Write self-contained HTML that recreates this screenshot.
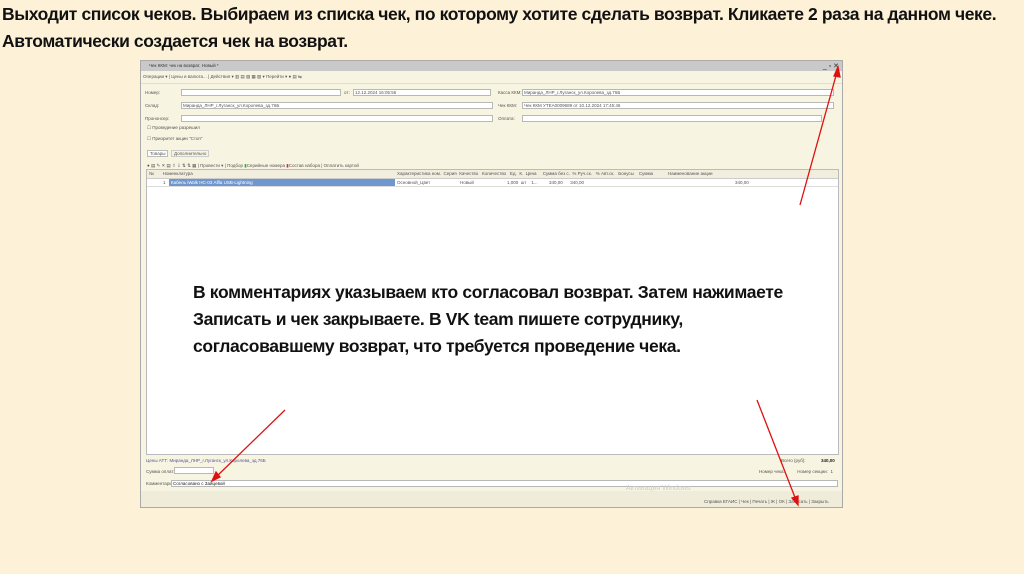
<!DOCTYPE html>
<html><head><meta charset="utf-8"><style>
body{margin:0;width:1024px;height:574px;background:#fdf1d8;font-family:"Liberation Sans",sans-serif;position:relative;overflow:hidden}
.h{position:absolute;left:2px;font-weight:bold;font-size:17.5px;color:#111;letter-spacing:-0.4px;white-space:nowrap}
.win{position:absolute;left:140px;top:60px;width:703px;height:448px;background:#f8f4e2;border:1px solid #aaa;box-sizing:border-box;overflow:hidden}
.tb{position:absolute;left:0;top:0;width:100%;height:10px;background:#c9c9c9}
.t{position:absolute;font-size:4.5px;color:#555;white-space:nowrap}
.f{position:absolute;height:7px;background:#fff;border:1px solid #b8b8b8;box-sizing:border-box}
.grid{position:absolute;left:5px;top:108px;width:693px;height:286px;background:#fff;border:1px solid #bbb;box-sizing:border-box}
.mid{position:absolute;left:193px;top:279px;font-weight:bold;font-size:17.5px;line-height:27px;color:#111;letter-spacing:-0.35px;white-space:nowrap}
</style></head><body>
<div class="h" style="top:4px">Выходит список чеков. Выбираем из списка чек, по которому хотите сделать возврат. Кликаете 2 раза на данном чеке.</div>
<div class="h" style="top:31px">Автоматически создается чек на возврат.</div>
<div class="win">
 <div class="tb"></div>
 <div class="t" style="left:8px;top:2px;color:#333">Чек ККМ: чек на возврат. Новый *</div>
 <div class="t" style="right:3px;top:1px;font-size:7px;color:#333">_ ▫ ✕</div>
 <div class="t" style="left:2px;top:13px">Операции ▾ | Цены и валюта... | Действия ▾ ▥ ▤ ▧ ▦ ▨ ▾ Перейти ▾ ● ▤ ⇆</div>
 <div style="position:absolute;left:0;top:22px;width:100%;height:1px;background:#ddd"></div>
 <div class="t" style="left:4px;top:29px">Номер:</div><div class="f" style="left:40px;top:28px;width:160px"></div>
 <div class="t" style="left:203px;top:29px">от:</div><div class="f" style="left:212px;top:28px;width:138px"></div>
 <div class="t" style="left:214px;top:29px">12.12.2024 16:05:56</div>
 <div class="t" style="left:4px;top:42px">Склад:</div><div class="f" style="left:40px;top:41px;width:312px"></div>
 <div class="t" style="left:42px;top:42px">Миранда_ЛНР_г.Луганск_ул.Королева_зд.76Б</div>
 <div class="t" style="left:4px;top:55px">Прононсер:</div><div class="f" style="left:40px;top:54px;width:312px"></div>
 <div class="t" style="left:357px;top:29px">Касса ККМ:</div><div class="f" style="left:381px;top:28px;width:312px"></div>
 <div class="t" style="left:383px;top:29px">Миранда_ЛНР_г.Луганск_ул.Королева_зд.76Б</div>
 <div class="t" style="left:357px;top:42px">Чек ККМ:</div><div class="f" style="left:381px;top:41px;width:312px"></div>
 <div class="t" style="left:383px;top:42px">Чек ККМ УТЕА0009689 от 10.12.2024 17:45:46</div>
 <div class="t" style="left:357px;top:55px">Оплата:</div><div class="f" style="left:381px;top:54px;width:300px"></div>
 <div class="t" style="left:6px;top:64px">☐ Проведение разрешил</div>
 <div class="t" style="left:6px;top:75px">☐ Приоритет акции "Стоп"</div>
 <div class="t" style="left:6px;top:89px;background:#fff;border:1px solid #bbb;padding:0 2px">Товары</div>
 <div class="t" style="left:30px;top:89px;border:1px solid #ccc;padding:0 2px">Дополнительно</div>
 <div class="t" style="left:6px;top:102px">● ▤ ✎ ✕ ▤ ⇧ ⇩ ⇅ ⇅ ▦ | Провести ▾ | Подбор <span style="color:#3a3">▮</span>Серийные номера <span style="color:#c33">▮</span>Состав набора | Оплатить картой</div>
 <div class="grid">
  <div style="position:absolute;left:0;top:0;width:100%;height:8px;background:#f1eedd;border-bottom:1px solid #ccc"></div>
  <div class="t" style="left:2px;top:1px">№&nbsp;&nbsp;&nbsp;&nbsp;&nbsp;&nbsp;&nbsp;Номенклатура</div>
  <div class="t" style="left:250px;top:1px">Характеристика ном. &nbsp;Серия &nbsp;Качество &nbsp;&nbsp;Количество &nbsp;&nbsp;Ед. &nbsp;К. &nbsp;Цена &nbsp;&nbsp;&nbsp;&nbsp;Сумма без с. &nbsp;% Руч.ск. &nbsp;&nbsp;% Авт.ск. &nbsp;&nbsp;Бонусы &nbsp;&nbsp;&nbsp;Сумма &nbsp;&nbsp;&nbsp;&nbsp;&nbsp;&nbsp;&nbsp;&nbsp;&nbsp;&nbsp;&nbsp;Наименование акции</div>
  <div style="position:absolute;left:22px;top:9px;width:226px;height:7px;background:#6f97cf"></div>
  <div class="t" style="left:24px;top:10px;color:#fff">Кабель iWalk HC-03 Аlfla USB-Lightning</div>
  <div class="t" style="left:16px;top:10px">1</div>
  <div class="t" style="left:250px;top:10px">Основной_Цвет</div>
  <div class="t" style="left:313px;top:10px">Новый</div>
  <div class="t" style="left:360px;top:10px">1,000 &nbsp;шт &nbsp;&nbsp;&nbsp;1... &nbsp;&nbsp;&nbsp;&nbsp;&nbsp;&nbsp;&nbsp;&nbsp;340,00 &nbsp;&nbsp;&nbsp;&nbsp;&nbsp;340,00</div>
  <div class="t" style="left:588px;top:10px">340,00</div>
  <div style="position:absolute;left:0;top:16px;width:100%;height:1px;background:#ddd"></div>
 </div>
 <div class="t" style="left:5px;top:397px;color:#559">Цены АТТ: Миранда_ЛНР_г.Луганск_ул.Королева_зд.76Б</div>
 <div class="t" style="left:640px;top:397px">Всего (руб):</div><div class="t" style="left:680px;top:397px;font-weight:bold;color:#222">340,00</div>
 <div class="t" style="left:5px;top:408px">Сумма оплат:</div><div class="f" style="left:33px;top:406px;width:40px"></div>
 <div class="t" style="left:618px;top:408px">Номер чека: &nbsp;&nbsp;&nbsp;&nbsp;&nbsp;&nbsp;&nbsp;&nbsp;&nbsp;Номер секции: &nbsp;1</div>
 <div class="t" style="left:5px;top:420px">Комментарий:</div><div class="f" style="left:30px;top:419px;width:667px"></div>
 <div class="t" style="left:32px;top:420px;color:#222">Согласовано с Зайцевой</div>
 <div style="position:absolute;left:0;top:430px;width:100%;height:17px;background:#efecd9"></div>
 <div class="t" style="left:485px;top:424px;font-size:7px;color:#ccc">Активация Windows</div>
 <div class="t" style="left:563px;top:438px">Справка ЕГАИС | Чек | Печать | Ж | ОК | Записать | Закрыть</div>
</div>
<div class="mid">В комментариях указываем кто согласовал возврат. Затем нажимаете<br>Записать и чек закрываете. В VK team пишете сотруднику,<br>согласовавшему возврат, что требуется проведение чека.</div>
<svg width="1024" height="574" style="position:absolute;left:0;top:0">
<g stroke="#d11" stroke-width="1.3" fill="#d11">
<line x1="285" y1="410" x2="215" y2="478"/><polygon points="212,481 216,472 220,477"/>
<line x1="800" y1="205" x2="837" y2="72"/><polygon points="838,67 840,77 834,76"/>
<line x1="757" y1="400" x2="796" y2="500"/><polygon points="798,505 792,498 798,496"/>
</g></svg>
</body></html>
